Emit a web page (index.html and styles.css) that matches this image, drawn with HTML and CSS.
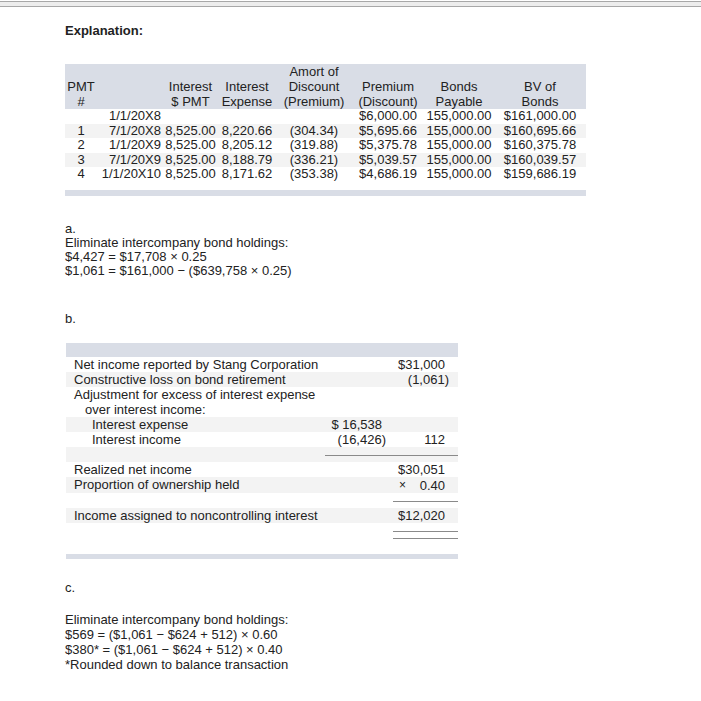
FILE: index.html
```html
<!DOCTYPE html>
<html lang="en">
<head>
<meta charset="utf-8">
<title>Explanation</title>
<link rel="stylesheet" href="styles.css">
</head>
<body>
<div class="topbar"></div>
<main class="page">
  <h1 class="title">Explanation:</h1>

  <section class="amort">
    <table class="amort-table">
      <colgroup>
        <col class="c-pmt"><col class="c-date"><col class="c-ipmt"><col class="c-iexp">
        <col class="c-amort"><col class="c-prem"><col class="c-bonds"><col class="c-bv">
      </colgroup>
      <thead>
        <tr>
          <th>PMT<br>#</th>
          <th></th>
          <th>Interest<br>$ PMT</th>
          <th>Interest<br>Expense</th>
          <th>Amort of<br>Discount<br>(Premium)</th>
          <th>Premium<br>(Discount)</th>
          <th>Bonds<br>Payable</th>
          <th>BV of<br>Bonds</th>
        </tr>
      </thead>
      <tbody>
        <tr><td></td><td class="date">1/1/20X8</td><td></td><td></td><td></td><td>$6,000.00</td><td>155,000.00</td><td>$161,000.00</td></tr>
        <tr><td>1</td><td class="date">7/1/20X8</td><td>8,525.00</td><td>8,220.66</td><td>(304.34)</td><td>$5,695.66</td><td>155,000.00</td><td>$160,695.66</td></tr>
        <tr><td>2</td><td class="date">1/1/20X9</td><td>8,525.00</td><td>8,205.12</td><td>(319.88)</td><td>$5,375.78</td><td>155,000.00</td><td>$160,375.78</td></tr>
        <tr><td>3</td><td class="date">7/1/20X9</td><td>8,525.00</td><td>8,188.79</td><td>(336.21)</td><td>$5,039.57</td><td>155,000.00</td><td>$160,039.57</td></tr>
        <tr><td>4</td><td class="date">1/1/20X10</td><td>8,525.00</td><td>8,171.62</td><td>(353.38)</td><td>$4,686.19</td><td>155,000.00</td><td>$159,686.19</td></tr>
      </tbody>
    </table>
    <div class="band band-amort"></div>
  </section>

  <section class="part part-a">
    <p class="part-label">a.</p>
    <p>Eliminate intercompany bond holdings:</p>
    <p>$4,427 = $17,708 × 0.25</p>
    <p>$1,061 = $161,000 − ($639,758 × 0.25)</p>
  </section>

  <section class="part part-b">
    <p class="part-label">b.</p>
    <div class="nci">
      <div class="band band-head"></div>
      <table class="nci-table">
        <colgroup><col class="n-label"><col class="n-sub"><col class="n-total"></colgroup>
        <tbody>
          <tr><td class="label">Net income reported by Stang Corporation</td><td></td><td class="total">$31,000</td></tr>
          <tr><td class="label">Constructive loss on bond retirement</td><td></td><td class="total"><span class="neg">(1,061)</span></td></tr>
          <tr><td class="label"><span class="line">Adjustment for excess of interest expense</span><span class="line indent-1">over interest income:</span></td><td></td><td></td></tr>
          <tr><td class="label indent-2">Interest expense</td><td class="sub">$ 16,538</td><td></td></tr>
          <tr><td class="label indent-2">Interest income</td><td class="sub"><span class="neg">(16,426)</span></td><td class="total">112</td></tr>
          <tr><td></td><td class="rule-cell"><div class="rule"></div></td><td class="rule-cell"><div class="rule"></div></td></tr>
          <tr><td class="label">Realized net income</td><td></td><td class="total">$30,051</td></tr>
          <tr><td class="label">Proportion of ownership held</td><td></td><td class="total"><span class="times"><span class="x">×</span><span>0.40</span></span></td></tr>
          <tr><td></td><td></td><td class="rule-cell"><div class="rule"></div></td></tr>
          <tr><td class="label">Income assigned to noncontrolling interest</td><td></td><td class="total">$12,020</td></tr>
          <tr><td></td><td></td><td class="rule-cell"><div class="rule rule-double"></div></td></tr>
        </tbody>
      </table>
      <div class="band band-foot"></div>
    </div>
  </section>

  <section class="part part-c">
    <p class="part-label">c.</p>
    <div class="lines">
      <p>Eliminate intercompany bond holdings:</p>
      <p>$569 = ($1,061 − $624 + 512) × 0.60</p>
      <p>$380* = ($1,061 − $624 + 512) × 0.40</p>
      <p>*Rounded down to balance transaction</p>
    </div>
  </section>
</main>
</body>
</html>
```

FILE: styles.css
```css
html, body {
  margin: 0;
  padding: 0;
  background: #ffffff;
}

body {
  font-family: "Liberation Sans", Arial, sans-serif;
  font-size: 13px;
  color: #222222;
}

.topbar {
  margin-top: 1px;
  height: 4px;
  border-top: 1px solid #a8a8a8;
  border-bottom: 1px solid #a8a8a8;
  background: #ededed;
}

.page {
  padding-left: 65px;
}

.title {
  margin: 16px 0 0 0;
  font-size: 13px;
  line-height: 15px;
  font-weight: bold;
  color: #222222;
}

p {
  margin: 0;
}

/* ---------- Amortization table ---------- */
.amort {
  margin-top: 26px;
  width: 521px;
}

.amort-table {
  width: 521px;
  table-layout: fixed;
  border-collapse: collapse;
  border-spacing: 0;
}

.c-pmt { width: 32px; }
.c-date { width: 66px; }
.c-ipmt { width: 55px; }
.c-iexp { width: 58px; }
.c-amort { width: 76px; }
.c-prem { width: 72px; }
.c-bonds { width: 70px; }
.c-bv { width: 92px; }

.amort-table th {
  padding: 0;
  font-weight: normal;
  line-height: 15px;
  text-align: center;
  vertical-align: bottom;
  white-space: nowrap;
}

.amort-table thead tr {
  background: #d9dde6;
}

.amort-table td {
  padding: 0;
  height: 14.5px;
  line-height: 14.5px;
  text-align: center;
  white-space: nowrap;
}

.amort-table td.date {
  text-align: right;
  padding-right: 2px;
}

.amort-table tbody tr:nth-child(even) {
  background: #f3f3f3;
}

.band {
  background: #d9dde6;
}

.band-amort {
  margin-top: 8px;
  height: 6px;
}

/* ---------- Parts ---------- */
.part p {
  line-height: 14px;
}

.part-a {
  margin-top: 26px;
}

.part-b {
  margin-top: 34px;
}

/* ---------- NCI table ---------- */
.nci {
  margin-top: 17px;
  margin-left: 1px;
  width: 392px;
}

.band-head {
  height: 14px;
}

.band-foot {
  margin-top: 15px;
  height: 5px;
}

.nci-table {
  width: 392px;
  table-layout: fixed;
  border-collapse: collapse;
  border-spacing: 0;
}

.n-label { width: 259px; }
.n-sub { width: 68px; }
.n-total { width: 65px; }

.nci-table td {
  padding: 0;
  height: 15px;
  line-height: 15px;
  white-space: nowrap;
  vertical-align: top;
}

.nci-table tbody tr:nth-child(even) {
  background: #f3f3f3;
}

.nci-table td.label {
  padding-left: 8px;
}

.nci-table td.label .line {
  display: block;
}

.nci-table .indent-1 {
  padding-left: 11px;
}

.nci-table td.indent-2 {
  padding-left: 26px;
}

.nci-table td.sub {
  text-align: right;
  padding-right: 11px;
}

.nci-table td.total {
  text-align: right;
  padding-right: 13px;
}

.neg {
  margin-right: -4px;
}

.times {
  display: inline-flex;
  justify-content: space-between;
  width: 46px;
}

.times .x {
  font-size: 12px;
}

.rule {
  margin-top: 8px;
  border-top: 1px solid #8a8a8a;
}

.rule-double {
  height: 6px;
  border-bottom: 1px solid #8a8a8a;
}

/* ---------- Part c ---------- */
.part-c {
  margin-top: 22px;
}

.part-c .lines {
  margin-top: 17px;
}

.part-c .lines p {
  line-height: 15px;
}
```
